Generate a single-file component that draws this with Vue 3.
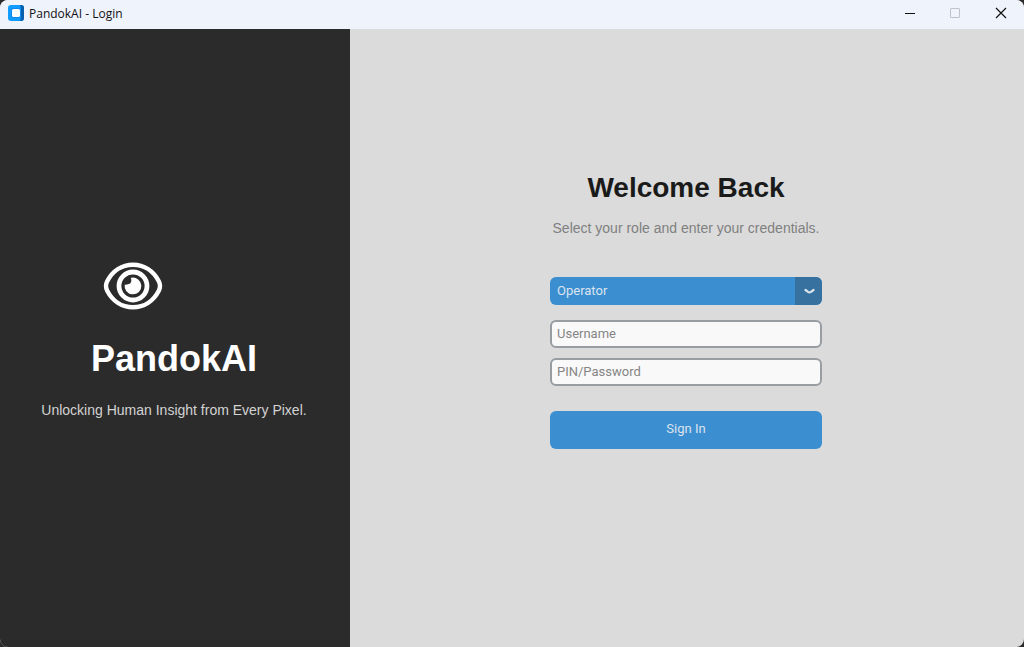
<script setup>
import { ref } from 'vue'

const roles = ['Operator', 'Admin']
const role = ref('Operator')
const username = ref('')
const password = ref('')
</script>

<template>
  <div class="window">
    <header class="titlebar">
      <svg class="app-icon" viewBox="0 0 16 16" aria-hidden="true">
        <rect width="16" height="16" rx="3" fill="#109cff" />
        <path d="M12 0h1a3 3 0 0 1 3 3v10a3 3 0 0 1-3 3h-1l1-4V4z" fill="#0660ae" />
        <rect x="3" y="3" width="10" height="10" rx="2" fill="#0a8af0" />
        <rect x="4" y="4" width="8" height="8" rx="1.5" fill="#fff" />
      </svg>
      <span class="caption">PandokAI - Login</span>
      <button class="control" type="button" aria-label="Minimize">
        <svg viewBox="0 0 12 12" aria-hidden="true"><path d="M2 6.5h10" stroke="#111" /></svg>
      </button>
      <button class="control" type="button" aria-label="Maximize" disabled>
        <svg viewBox="0 0 12 12" aria-hidden="true"><rect x="1.5" y="1.5" width="9" height="9" rx="0.5" stroke="#c0c2c8" fill="none" /></svg>
      </button>
      <button class="control" type="button" aria-label="Close">
        <svg viewBox="0 0 12 12" aria-hidden="true"><path d="M1 1l10 10M11 1L1 11" stroke="#111" stroke-width="1.2" /></svg>
      </button>
    </header>

    <main class="content">
      <section class="brand">
        <svg class="eye" viewBox="0 0 60 48" aria-hidden="true">
          <path d="M30 2.800C19 2.800 9.500 9 4.200 19.300Q1.800 24 4.200 28.700C9.500 39 19 45.200 30 45.200S50.500 39 55.800 28.700Q58.200 24 55.800 19.300C50.500 9 41 2.800 30 2.800z" fill="none" stroke="#fff" stroke-width="4.400" />
          <circle cx="30" cy="24" r="14" fill="none" stroke="#fff" stroke-width="4.800" />
          <path d="M28.500 15.700A8.400 8.400 0 1 1 21.700 22.500Q23 23 25 22.200Q28.500 21.500 28.300 18.500Q28.500 17 27.700 16z" fill="#fff" />
        </svg>
        <h1>PandokAI</h1>
        <p>Unlocking Human Insight from Every Pixel.</p>
      </section>

      <section class="login">
        <form @submit.prevent>
          <h2>Welcome Back</h2>
          <p>Select your role and enter your credentials.</p>
          <div class="role">
            <select v-model="role" aria-label="Role">
              <option v-for="item in roles" :key="item">{{ item }}</option>
            </select>
            <span class="arrow">
              <svg viewBox="0 0 12 8" aria-hidden="true"><path d="M2.500 3L5 4.800Q6.500 5.800 8 4.800L10.500 3" fill="none" stroke="#dce4ee" stroke-width="2.200" stroke-linecap="round" /></svg>
            </span>
          </div>
          <input v-model="username" type="text" placeholder="Username" aria-label="Username" />
          <input v-model="password" type="password" placeholder="PIN/Password" aria-label="PIN/Password" />
          <button class="submit" type="submit">Sign In</button>
        </form>
      </section>
    </main>
  </div>
</template>

<style>
body {
  background: #2b2b2b;
}
</style>

<style scoped>
.window {
  display: flex;
  flex-direction: column;
  min-height: 100vh;
  border-radius: 8px;
  overflow: hidden;
  background: #dbdbdb;
  font-family: Roboto, sans-serif;
}

.titlebar {
  display: flex;
  align-items: center;
  height: 29px;
  padding-left: 8px;
  box-sizing: border-box;
  background: #eff3fb;
}

.app-icon {
  width: 16px;
  height: 16px;
  margin-bottom: 3px;
}

.caption {
  flex: 1;
  padding: 0 0 2px 5px;
  font: 12px/16px "Open Sans", "Noto Sans", sans-serif;
  color: #111;
}

.control {
  display: flex;
  align-items: center;
  justify-content: center;
  width: 46px;
  height: 26px;
  margin-bottom: 3px;
  padding: 0;
  border: 0;
  background: none;
}

.control svg {
  width: 12px;
  height: 12px;
}

.content {
  display: flex;
  flex: 1;
}

.brand {
  display: flex;
  flex-direction: column;
  justify-content: center;
  align-items: center;
  box-sizing: border-box;
  width: 350px;
  padding: 6px 2px 0 0;
  background: #2b2b2b;
  font-family: "Liberation Sans", Arial, sans-serif;
}

.eye {
  width: 60px;
  height: 48px;
  margin-right: 82px;
}

h1 {
  margin: 28px 0 20px;
  font-size: 36px;
  line-height: 42px;
  color: #fff;
}

.brand p {
  margin: 0;
  font-size: 14px;
  line-height: 20px;
  color: #d3d3d3;
}

.login {
  display: flex;
  flex: 1;
  align-items: center;
  justify-content: center;
  padding-right: 2px;
}

form {
  display: flex;
  flex-direction: column;
  width: 272px;
  padding-bottom: 58px;
}

h2,
form p {
  font-family: "Liberation Sans", Arial, sans-serif;
  text-align: center;
  white-space: nowrap;
}

h2 {
  margin: 0;
  font-size: 28px;
  line-height: 36px;
  color: #1a1a1a;
}

form p {
  margin: 12px 0 39px;
  font-size: 14px;
  line-height: 20px;
  color: #808080;
}

.role {
  position: relative;
  height: 28px;
  margin-bottom: 15px;
}

select {
  width: 100%;
  height: 28px;
  padding: 0 30px 0 7px;
  border: 0;
  border-radius: 6px;
  appearance: none;
  background: #3b8ed0;
  color: #dce4ee;
  font: 13px Roboto, sans-serif;
}

.arrow {
  position: absolute;
  top: 0;
  right: 0;
  display: flex;
  align-items: center;
  justify-content: center;
  width: 27px;
  height: 28px;
  border-radius: 0 6px 6px 0;
  background: #36719f;
  pointer-events: none;
}

.arrow svg {
  width: 12px;
  height: 8px;
}

input {
  width: 100%;
  height: 28px;
  margin: 0 0 10px;
  padding: 0 5px;
  box-sizing: border-box;
  border: 2px solid #979da2;
  border-radius: 6px;
  background: #f9f9fa;
  color: #1a1a1a;
  font: 13px Roboto, sans-serif;
}

input::placeholder {
  color: #858585;
  opacity: 1;
}

.submit {
  height: 38px;
  margin-top: 15px;
  padding: 0 0 2px;
  border: 0;
  border-radius: 6px;
  background: #3b8ed0;
  color: #dce4ee;
  font: 13px Roboto, sans-serif;
}
</style>
